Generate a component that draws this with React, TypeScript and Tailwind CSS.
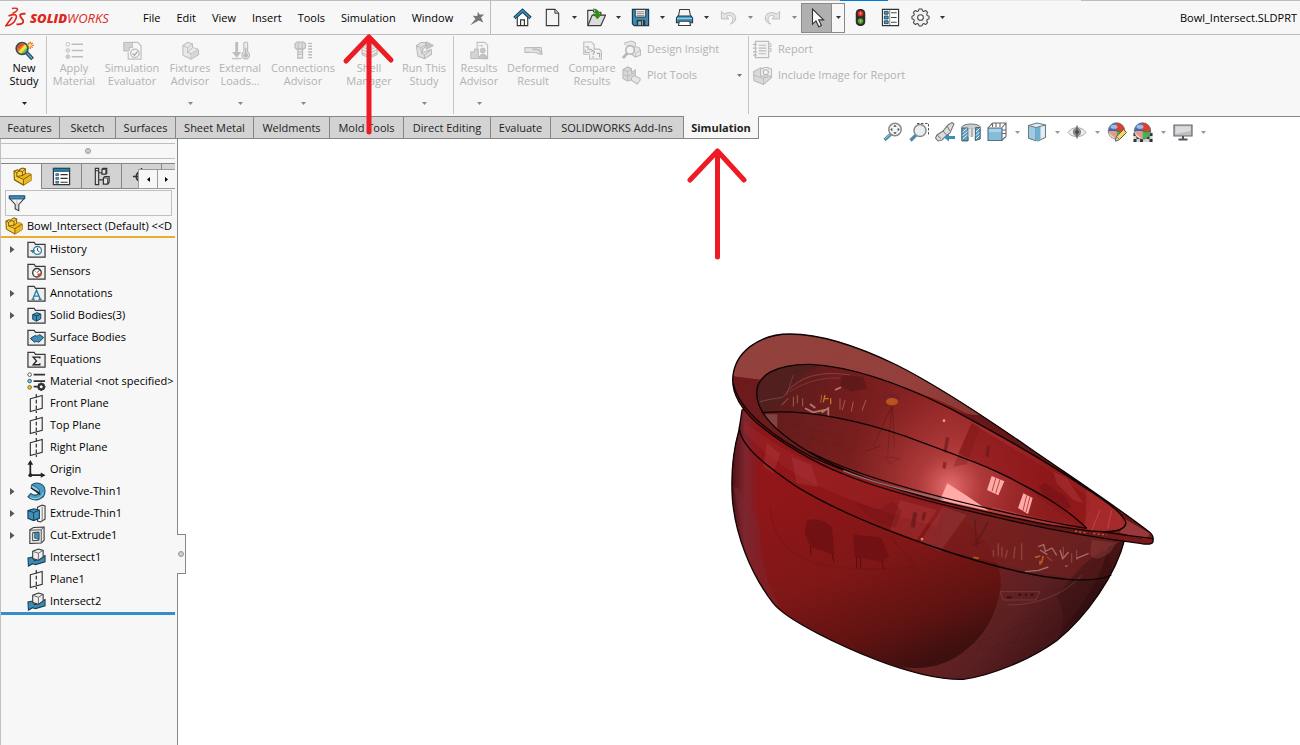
import React from 'react';

type IconProps = { className?: string };
type IconType = React.FC<IconProps>;

const makeIcon = (children: React.ReactNode): IconType => {
  const Icon: IconType = ({ className = 'w-5 h-5' }) => (
    <svg className={`${className} shrink-0`} viewBox="0 0 20 20" fill="none" aria-hidden="true">
      {children}
    </svg>
  );
  return Icon;
};

const Caret: React.FC<{ tone?: string }> = ({ tone = 'text-[#333]' }) => (
  <svg className={`w-[5px] h-[3px] shrink-0 ${tone}`} viewBox="0 0 5 3" fill="currentColor" aria-hidden="true">
    <path d="M0 0h5L2.5 3z" />
  </svg>
);

/* ---------- title bar icons ---------- */

const HomeIcon = makeIcon(
  <>
    <path d="M4.500 9.500V18.500h11V9.500L10 4.500z" fill="#fff" stroke="#333" strokeWidth="1.200" />
    <path d="M8 18.500v-6h4v6" stroke="#333" strokeWidth="1.200" />
    <path d="M1.500 10.500L10 2.500l8.500 8" stroke="#123f58" strokeWidth="3.400" />
    <path d="M2 10.300L10 2.800l8 7.500" stroke="#3f8fb8" strokeWidth="1.600" />
  </>
);

const NewDocIcon = makeIcon(
  <>
    <path d="M3.500 1.500h9l4 4v13h-13z" fill="#f4f4f4" stroke="#3a3a3a" strokeWidth="1.200" />
    <path d="M12.500 1.500v4h4" fill="#ccc" stroke="#3a3a3a" />
  </>
);

const OpenIcon = makeIcon(
  <>
    <path d="M.8 18.500V2.500h5.700l1 2h7v4" fill="#ececec" stroke="#3a3a3a" strokeWidth="1.200" />
    <path d="M1 18.500l4.500-11h14L14.500 18.500z" fill="#ddd" stroke="#3a3a3a" strokeWidth="1.200" />
    <path d="M6.500 1c4 0 6 1.500 6 5.200h3L11 11.500 6.500 6.200h2.800C9.300 3.500 8.600 2 6.500 1z" fill="#2e9410" stroke="#1e6d08" strokeWidth=".5" />
  </>
);

const SaveIcon = makeIcon(
  <>
    <path d="M1.500 1.500h17v17h-15l-2-2z" fill="#3d8cb4" stroke="#173b50" strokeWidth="1.300" />
    <path d="M4.500 1.500h11v8h-11z" fill="#f2f2f2" stroke="#333" />
    <path d="M6 4h8M6 6h8M6 8h8" stroke="#888" />
    <path d="M6 12.500h9v6H6z" fill="#333" />
    <path d="M7.500 14h3v4h-3z" fill="#7fb9d6" />
    <path d="M12 13v5" stroke="#aaa" />
  </>
);

const PrintIcon = makeIcon(
  <>
    <path d="M5 1.500h10l1.500 8h-13z" fill="#f5f5f5" stroke="#3a3a3a" strokeWidth="1.100" />
    <path d="M3 8.500h14l1.500 2v5h-17v-5z" fill="#3c8fb8" stroke="#173b50" strokeWidth="1.100" />
    <path d="M2 11h16" stroke="#8cc9e6" strokeWidth="1.500" />
    <path d="M4.500 14h11l.8 4.500H3.700z" fill="#fff" stroke="#3a3a3a" strokeWidth="1.100" />
  </>
);

const UndoIcon = makeIcon(
  <path d="M2.500 3.500v8h8L7.800 8.900c3-1.900 6-.8 6.700 1.700.7 2.400-.4 4.300-2.500 6.400 4.200-1.700 6.300-4.300 5.400-7.900C16.300 5 11 3.400 5.400 6.400z" fill="#e4e4e4" stroke="#bdbdbd" />
);

const RedoIcon = makeIcon(
  <path d="M17.500 3.500v8h-8l2.700-2.600c-3-1.900-6-.8-6.700 1.700-.7 2.400.4 4.300 2.500 6.400-4.200-1.700-6.300-4.300-5.400-7.900C3.700 5 9 3.400 14.600 6.400z" fill="#e4e4e4" stroke="#bdbdbd" />
);

const PointerIcon = makeIcon(
  <path d="M5.500 1v15.200l3.500-3.300 2.800 5.800 2.600-1.200-2.700-5.600h4.900z" fill="#fff" stroke="#333" strokeWidth="1.100" />
);

const TrafficIcon = makeIcon(
  <>
    <rect x="5" y="1" width="10" height="18" rx="4.500" fill="#2c2c2c" />
    <circle cx="10" cy="5.800" r="3" fill="#e0281a" />
    <circle cx="10" cy="13.800" r="3" fill="#4e9e1d" />
    <path d="M8 5.500h4M8 13.500h4M10 4v3.500M10 12v3.500" stroke="#ffffff" strokeOpacity=".35" />
  </>
);

const OptionsListIcon = makeIcon(
  <>
    <path d="M1.500 1.500h17v17h-17z" fill="#fff" stroke="#333" strokeWidth="1.200" />
    <path d="M3.500 3.500h4v3h-4zM3.500 8.500h4v3h-4zM3.500 13.500h4v3h-4z" fill="#4c9cc4" stroke="#1c4a62" />
    <path d="M10.500 5h6M10.500 10h6M10.500 15h6" stroke="#444" strokeWidth="1.200" />
    <path d="M9.200 2v16" stroke="#555" strokeWidth=".7" />
  </>
);

const GearIcon = makeIcon(
  <>
    <path
      d="M8.500 2h3l.6 2 1.400.6 1.900-1 2.100 2.100-1 1.900.6 1.400 1.900.6v2.800l-1.900.6-.6 1.400 1 1.900-2.100 2.100-1.900-1-1.400.6-.6 1.900h-3l-.6-1.900-1.400-.6-1.900 1-2.100-2.100 1-1.900-.6-1.400L1 12.400V9.600L2.900 9l.6-1.400-1-1.900 2.100-2.100 1.900 1L7.900 4z"
      fill="#f1f1f1" stroke="#444" strokeWidth="1.100" strokeLinejoin="round" transform="translate(0 -1)"
    />
    <circle cx="10" cy="10" r="3" fill="#fff" stroke="#444" strokeWidth="1.100" />
  </>
);

const PinIcon = makeIcon(
  <path d="M11 3l2 3.200 5-.2-3.500 3.500L17 15l-5-2.200L2.500 18l5.800-7-3-3.500 5 .2z" fill="#777" />
);

/* ---------- ribbon icons ---------- */

const NewStudyIcon = makeIcon(
  <>
    <path d="M12 12l6.500 7" stroke="#1f4b63" strokeWidth="4" />
    <path d="M12.500 12.500l5.500 6" stroke="#6aa9c9" strokeWidth="1.500" />
    <circle cx="7.500" cy="8" r="6" fill="#f4e53b" />
    <path d="M4 3h7L4 11H2V6z" fill="#ef7a28" />
    <path d="M5 3.200h5L3 8.500V6z" fill="#e8452a" />
    <path d="M6 13.500L13 6v4l-3.500 4z" fill="#5fc94a" />
    <path d="M8.500 14L13.500 8v3l-2.500 3z" fill="#49a6e8" />
    <circle cx="7.500" cy="8" r="6.200" stroke="#3b4a50" strokeWidth="1.800" />
    <path d="M16 .5v8M12 4.500h8M13.500 2l5 5M18.500 2l-5 5" stroke="#c96d10" strokeWidth="1.200" />
    <circle cx="16" cy="4.500" r="1.700" fill="#ffe37a" />
  </>
);

const MaterialIcon = makeIcon(
  <>
    <circle cx="3" cy="3.500" r="2" stroke="#c4c4c4" />
    <circle cx="3" cy="10" r="2" fill="#ddd" stroke="#c4c4c4" />
    <circle cx="3" cy="16.500" r="2" fill="#ccc" stroke="#c4c4c4" />
    <path d="M7 3.500h12M7 10h12M7 16.500h12" stroke="#bdbdbd" strokeWidth="1.500" />
  </>
);

const EvaluatorIcon = makeIcon(
  <>
    <path d="M9.500 1.500h6l3.500 3.500v14H5.500v-7" stroke="#c0c0c0" strokeWidth="1.300" />
    <path d="M.8 1.500h9V7H6.500v3.500H.8z" fill="#d4d4d4" stroke="#b8b8b8" />
    <circle cx="12.500" cy="13" r="4.500" fill="#f3f3f3" stroke="#bcbcbc" strokeWidth="1.300" />
    <path d="M10 13l2 2 3.500-4" stroke="#aaa" strokeWidth="1.300" />
  </>
);

const FixturesIcon = makeIcon(
  <>
    <path d="M2 5l5-3.500L12 3v4l5 1 1.500 2v4.500l-8 4.500L2 15z" fill="#e9e9e9" stroke="#bdbdbd" strokeWidth="1.100" />
    <path d="M2 5l5 2v5l3.500 1.500M7 7l5-4M10.500 19v-5.500L18 9M7 12l5-5" stroke="#bdbdbd" />
    <path d="M10.500 14l7.500-4.500v5l-7.500 4z" fill="#d6d6d6" />
  </>
);

const LoadsIcon = makeIcon(
  <>
    <path d="M4.500 1h3v10.500H11L6 17.500 1 11.500h3.500z" fill="#bdbdbd" />
    <path d="M1 18.500h10" stroke="#c4c4c4" strokeWidth="1.500" />
    <path d="M13.500 3a2 2 0 014 0v8.500a4 4 0 11-4 0z" fill="#eee" stroke="#bbb" strokeWidth="1.200" />
    <circle cx="15.500" cy="15" r="2.500" fill="#bbb" />
    <path d="M15.500 7v8" stroke="#bbb" strokeWidth="1.500" />
  </>
);

const ConnectionsIcon = makeIcon(
  <>
    <path d="M1 3l2-2h7l2 2v4l-2 1.500H3L1 7z" fill="#ddd" stroke="#b8b8b8" strokeWidth="1.200" />
    <path d="M4 8.500h5V18H4z" fill="#e9e9e9" stroke="#b8b8b8" strokeWidth="1.200" />
    <path d="M4 11.500h5M4 14h5M4.500 1.500v6.500M8.500 1.500v6.500" stroke="#b8b8b8" />
    <path d="M15 2.500h4M15 5.500h4M15 8.500h4M15 11.500h4M15 14.500h4M15 17.500h4" stroke="#bbb" strokeWidth="1.500" />
  </>
);

const ShellIcon = makeIcon(
  <>
    <path d="M2 6l8-4 8 4-8 4z" fill="#e2e2e2" stroke="#c0c0c0" />
    <path d="M2 9l8 4 8-4M2 12l8 4 8-4M2 6v8l8 4 8-4V6" stroke="#c0c0c0" strokeWidth="1.300" />
  </>
);

const RunIcon = makeIcon(
  <>
    <path d="M1.500 5l5-3.500H11V6L8 9v3l9-3 .5 5-7.500 4.500-7-2.500z" fill="#e0e0e0" stroke="#b8b8b8" strokeWidth="1.100" />
    <path d="M1.500 5L6 7l5-3M6 7l1 6.500 3 1V19M10 14.500L17 9" stroke="#b8b8b8" />
    <path d="M12 .8l7.500 4-7.500 4z" fill="#c4c4c4" stroke="#bbb" />
  </>
);

const ResultsIcon = makeIcon(
  <>
    <path d="M7.500 9V1.500h8l3 3v14H14" stroke="#c0c0c0" strokeWidth="1.200" />
    <path d="M.8 11.500h4V8.500h4v10h-8z" fill="#d5d5d5" stroke="#b8b8b8" />
    <path d="M9 5h5M12 4v2" stroke="#c6c6c6" />
    <circle cx="13.500" cy="10" r="2.500" fill="#c9c9c9" stroke="#b5b5b5" />
    <path d="M9.500 18.500c0-6 8.500-6 8.500 0z" fill="#c4c4c4" stroke="#b5b5b5" />
  </>
);

const DeformedIcon = makeIcon(
  <>
    <path d="M1 7h17l1 7h-3c-1-3-8-2-15-2z" fill="#e6e6e6" stroke="#bdbdbd" strokeWidth="1.200" />
    <path d="M9 9c4-.5 8-.5 9 4" stroke="#c0c0c0" strokeWidth="2" />
  </>
);

const CompareIcon = makeIcon(
  <>
    <path d="M.8 1h8l3 3v10h-11z" fill="#f3f3f3" stroke="#bdbdbd" strokeWidth="1.200" />
    <path d="M2.500 6h3v3h4M2.500 9v3h5" stroke="#bdbdbd" strokeWidth="1.500" />
    <path d="M11 8.500h6l2.500 2.500v8H7V15" fill="#f3f3f3" stroke="#bdbdbd" strokeWidth="1.200" />
    <path d="M9 11.500c.5-2 3.500-1.500 3 .5-.3 1-1.500 1-1.500 2.500M10.500 16v1.500M14.500 13h3v4" stroke="#ababab" strokeWidth="1.300" />
  </>
);

const InsightIcon = makeIcon(
  <>
    <path d="M3 5V3l7-2 4 2v4l4 1 1.500 3v5L14 18l-4-3" fill="#e6e6e6" stroke="#bdbdbd" strokeWidth="1.100" />
    <path d="M14 7l-3 2M19 11l-5 3v4" stroke="#bdbdbd" />
    <circle cx="8.500" cy="10.500" r="4.500" fill="#f4f4f4" stroke="#b3b3b3" strokeWidth="1.600" />
    <path d="M5.500 14L1 19" stroke="#b8b8b8" strokeWidth="3" />
  </>
);

const PlotIcon = makeIcon(
  <>
    <path d="M1 4l5-3 4 2v4l4-3v9l-8 3-5-3z" fill="#d9d9d9" stroke="#b9b9b9" strokeWidth="1.100" />
    <path d="M1 4l5 2v9M6 6l4-3M2 9l4 2 8-4" stroke="#b9b9b9" />
    <path d="M10 12l3-2 6 3v2l-3 4-6-4z" fill="#e6e6e6" stroke="#b9b9b9" strokeWidth="1.100" />
  </>
);

const ReportIcon = makeIcon(
  <>
    <path d="M2.500 1.500h14v17h-14z" fill="#f3f3f3" stroke="#bdbdbd" strokeWidth="1.300" />
    <path d="M6 5.500h8M6 8.500h8M6 11.500h8M6 14.500h8" stroke="#bababa" strokeWidth="1.200" />
    <path d="M0 4.500h4M0 8.500h4M0 12.500h4M0 16h4" stroke="#bababa" strokeWidth="1.300" />
    <path d="M17 4h2v3h-2M17 9h2v3h-2" stroke="#bababa" />
  </>
);

const CameraIcon = makeIcon(
  <>
    <path d="M.5 6l7-4h2v8h10v2L11 19.500l-10-4z" fill="#d9d9d9" stroke="#bababa" strokeWidth="1.100" />
    <path d="M.5 9.500L11 13v6M11 13l8-3" stroke="#bababa" />
    <path d="M8 3h3l1-1.500h4L17 3h2.500v7.500H8z" fill="#eee" stroke="#bababa" strokeWidth="1.100" />
    <circle cx="13.500" cy="6.500" r="2.600" fill="#f8f8f8" stroke="#b3b3b3" strokeWidth="1.200" />
  </>
);

/* ---------- view toolbar icons ---------- */

const ZoomFitIcon = makeIcon(
  <>
    <path d="M8 12L1.500 18" stroke="#4f8ba9" strokeWidth="3.200" />
    <path d="M7.500 12L2 17" stroke="#a5cadc" strokeWidth="1" />
    <circle cx="12" cy="7.500" r="6.200" fill="#f2f4f5" stroke="#8a8a8a" strokeWidth="1.500" />
    <path d="M12 2.800l1.700 2h-3.400zM12 12.200l1.700-2h-3.400zM7.300 7.500l2-1.700v3.400zM16.700 7.500l-2-1.700v3.400z" fill="#444" />
  </>
);

const ZoomAreaIcon = makeIcon(
  <>
    <path d="M8 1.500h11.500V14" stroke="#555" strokeDasharray="2.500 1.500" />
    <path d="M7 13l-5.500 5.500" stroke="#4f8ba9" strokeWidth="3.200" />
    <circle cx="11" cy="8.500" r="6" fill="#e9eef0" stroke="#8a8a8a" strokeWidth="1.500" />
  </>
);

const PrevViewIcon = makeIcon(
  <>
    <path d="M13 3l4-2.500 2 1.500-4 9-3 2-5 5-4 1-2.500-3L2 13l6-4z" fill="#dcdcdc" stroke="#777" strokeWidth="1.100" />
    <path d="M12 4l3 5M8 9l3.500 4M2 13l4 3.500" stroke="#777" />
    <path d="M9 15.500l5-4V14h6v3h-6v2.500z" fill="#3f8cb8" />
  </>
);

const SectionIcon = makeIcon(
  <>
    <path d="M.8 5C2 1 18 1 19.200 5v12l-5 1.500V7H7v12H.8z" fill="#c9ced1" stroke="#777" />
    <path d="M1 6h6v12.500H1zM14.500 5.500H19v11l-4.500 2z" fill="#5b9ec0" stroke="#4b6d7e" />
    <path d="M1.500 10L6 6.500M1.500 13.500L6.500 9.500M1.500 17l5-4M15 10l3.500-3.500M15 13.500l3.500-3.500M15 17l3.500-3.500" stroke="#e5f2f8" />
    <path d="M7.500 6.500h6.500V15H7.500z" fill="#e2e2e2" />
    <path d="M10 6.500h2V15h-2z" fill="#b4b4b4" />
  </>
);

const OrientationIcon = makeIcon(
  <>
    <path d="M5.500 1h13.500v13.500M5.500 1v4M19 1l-4 4.500M9 1v4M13 1.500V5M15 8h4M15 11.500h4M5.500 1L1 6M15 18l4-3.500" stroke="#666" strokeWidth="1.100" />
    <path d="M1 6h14v12.500H1z" fill="#86bcd8" stroke="#4d7388" strokeWidth="1.100" />
    <path d="M2 7h12v3H2z" fill="#a8d3e8" />
  </>
);

const DisplayStyleIcon = makeIcon(
  <>
    <path d="M1.500 3.500L10 1l8.500 2v12.500L11 19l-9.500-3z" fill="#e6eef2" stroke="#6f7d84" strokeWidth="1.100" />
    <path d="M1.500 3.500L9 5.500V19l-7.500-3z" fill="#9ecbe1" stroke="#6f7d84" />
    <path d="M9 5.500l4.500-1V18L9 19z" fill="#6fb0d0" />
    <path d="M9 5.500l9.500-2.500" stroke="#6f7d84" />
  </>
);

const EyeIcon = makeIcon(
  <>
    <path d="M1 10.500C5 4 15 4 19 10.500 15 16 5 16 1 10.500z" fill="#eee" stroke="#aaa" />
    <circle cx="10" cy="10" r="4.200" fill="#8c8c8c" />
    <circle cx="10" cy="10" r="1.800" fill="#333" />
    <path d="M10 3.500v13" stroke="#555" strokeWidth="1.200" />
  </>
);

const ball = (
  <>
    <circle cx="9.500" cy="9" r="8.300" fill="#3f78c8" />
    <path d="M9.500 9V.7A8.300 8.300 0 0117.800 9z" fill="#e03c30" />
    <path d="M9.500 9h8.300a8.300 8.300 0 01-8.300 8.300z" fill="#45b44b" />
    <path d="M9.500 9v8.300A8.300 8.300 0 011.200 9z" fill="#efe7d8" />
    <path d="M1.200 9q4-2.500 8.300 0 4.500 2.200 8.300 0" stroke="#444" strokeWidth=".6" />
    <path d="M1.200 9l8.300 0L9 17C6 14 3 13 1.200 9z" fill="#e04a3a" fillOpacity=".5" />
    <ellipse cx="7" cy="4.800" rx="3.500" ry="2" fill="#fff" fillOpacity=".5" />
    <circle cx="9.500" cy="9" r="8.300" stroke="#666" strokeWidth=".6" />
  </>
);

const AppearanceIcon = makeIcon(
  <>
    {ball}
    <path d="M8.500 19l1-4.500 7-7 3 3-7 7z" fill="#f3d36a" stroke="#6b5a2a" />
    <path d="M8.500 19l1-4.500 3 3z" fill="#e9e2cc" stroke="#555" strokeWidth=".7" />
  </>
);

const SceneIcon = makeIcon(
  <>
    <path d="M.5 10.500h19V20H.5z" fill="#d5d5d5" />
    <path d="M.5 11h3v3h-3zM16.500 11h3v3h-3zM3.500 14h3v3h-3zM13.500 14h3v3h-3zM.5 17h3v3h-3zM7 17h3v3H7zM16.500 17h3v3h-3z" fill="#333" />
    {ball}
  </>
);

const MonitorIcon = makeIcon(
  <>
    <path d="M1 3h18v11H1z" fill="#bcc0c2" stroke="#666" strokeWidth="1.200" />
    <path d="M2.500 4.500h15V9l-15 3z" fill="#dadddf" />
    <path d="M10 14v3M5.500 17.500h9" stroke="#555" strokeWidth="2" />
  </>
);

/* ---------- feature tree icons ---------- */

const PartIcon = makeIcon(
  <>
    <path d="M1 4.500l3.500-1.500 2.500 1V2.500L10 1l3 1v5l3.500-.5 2.500 1.500v6L11 19l-9.500-5.500z" fill="#f8cf45" stroke="#7a5800" strokeWidth="1.100" />
    <path d="M7 9.500l6-2.500 3.500-.5L19 8v6l-8 5v-6.500z" fill="#eeb51c" />
    <path d="M1 4.500l3 1.500v4l7 3 8-5M4 6l3-2M7 4l3 1v4.500M10 5l3-3M4 10l6-1 3-2M11 13v6" stroke="#7a5800" />
  </>
);

const PropertyIcon = makeIcon(
  <>
    <path d="M1.500 1.500h17v17h-17z" fill="#fff" stroke="#333" strokeWidth="1.300" />
    <path d="M1.500 1.500h17v3h-17z" fill="#2f80ab" stroke="#1c4a62" />
    <path d="M4 7h3v2H4zM4 11h3v2H4zM4 15h3v2H4z" fill="#4c9cc4" stroke="#1c4a62" strokeWidth=".7" />
    <path d="M9 8h7.500M9 12h7.500M9 16h7.500" stroke="#333" strokeWidth="1.200" />
  </>
);

const ConfigIcon = makeIcon(
  <>
    <path d="M3.500 1.500h3.500v17H3.500zM3.500 4h3.500M7 6h4M7 13.500h5" fill="#ddd" stroke="#333" strokeWidth="1.200" />
    <path d="M10.500 2.500l1-1h4v5l-1 1h-4zM12 11.500l1.500-1.500H18v6l-1.500 2H12z" fill="#e6e6e6" stroke="#333" strokeWidth="1.300" />
    <path d="M10.500 2.500h4v5M12 11.500h4.500V18" stroke="#333" />
  </>
);

const TargetIcon = makeIcon(
  <>
    <path d="M1 10h18M10 1v18" stroke="#333" strokeWidth="1.500" />
    <circle cx="10" cy="10" r="5.500" stroke="#333" strokeWidth="1.800" />
  </>
);

const FilterIcon = makeIcon(
  <>
    <path d="M1.500 2.500h17v2L12 11.500v7l-4-2v-5L1.500 4.500z" fill="#f5f5f5" stroke="#3b3b3b" strokeWidth="1.200" />
    <path d="M1.500 2h17v3.500h-17z" fill="#3c8fb8" stroke="#1d4b63" />
    <path d="M10 7v10" stroke="#b5b5b5" />
  </>
);

const folder = <path d="M1 18V2.500h6.500l1.500 2h10V18z" fill="#efefef" stroke="#3a3a3a" strokeWidth="1.300" />;

const HistoryIcon = makeIcon(
  <>
    {folder}
    <circle cx="11" cy="11" r="4.200" fill="#fff" stroke="#2f7ea6" strokeWidth="1.400" />
    <path d="M11 8.500V11l2.200 1.500" stroke="#333" />
    <path d="M3 10.500h6l-3 3.500z" fill="#2f7ea6" />
  </>
);

const SensorsIcon = makeIcon(
  <>
    {folder}
    <circle cx="10.500" cy="11.300" r="4.500" fill="#fff" stroke="#333" strokeWidth="1.400" />
    <path d="M10.500 11.300l3-3M8 9l1 1" stroke="#333" />
    <path d="M11 12h4c0 2-1.500 3.500-3.500 3.800z" fill="#e0401f" />
  </>
);

const AnnotationsIcon = makeIcon(
  <>
    {folder}
    <path d="M6 16l4-9.500L14 16M7.500 12.800h5M4.800 16.200h3.400M12 16.200h3.500" stroke="#2f7ea6" strokeWidth="1.500" />
  </>
);

const SolidIcon = makeIcon(
  <>
    {folder}
    <path d="M6 9l4.500-2 4 1.500v5L10 16l-4-2z" fill="#3f90ba" stroke="#153e54" />
    <path d="M6 9l4 1.500L14.500 8.500M10 10.500V16" stroke="#153e54" />
  </>
);

const SurfaceIcon = makeIcon(
  <>
    {folder}
    <path d="M3.500 11l5-3c2 1 3 0 5-1l4 3-5 5c-2-1-3-1-4.500 0z" fill="#3f90ba" stroke="#153e54" />
  </>
);

const EquationsIcon = makeIcon(
  <>
    {folder}
    <path d="M13.500 9V7.500h-7l3.500 4-3.500 4h7V14" stroke="#222" strokeWidth="1.400" />
  </>
);

const MaterialTreeIcon = makeIcon(
  <>
    <circle cx="2.800" cy="2.800" r="1.900" fill="#fff" stroke="#555" />
    <circle cx="2.800" cy="9.500" r="1.900" fill="#7fc1e3" stroke="#27607d" />
    <circle cx="2.800" cy="16.200" r="1.900" fill="#f6c62c" stroke="#84640d" />
    <path d="M7 2.800h12M7 9.500h12M7 15.500h4" stroke="#333" strokeWidth="1.800" />
    <circle cx="15" cy="15.500" r="2.800" stroke="#333" strokeWidth="2.400" />
    <path d="M15 11v2M15 18v2M10.500 15.500h2M17.500 15.500h2M12 12.500l1.500 1.500M18 12.500L16.500 14M12 18.500l1.500-1.500M18 18.500L16.500 17" stroke="#333" strokeWidth="1.500" />
  </>
);

const PlaneIcon = makeIcon(
  <>
    <path d="M3.500 5L16 1.500v13.500L3.500 18.500z" stroke="#333" strokeWidth="1.200" />
    <path d="M9.800 0v20" stroke="#333" strokeWidth="1.300" strokeDasharray="4 2" />
  </>
);

const OriginIcon = makeIcon(
  <>
    <path d="M3.500 3v13H16" stroke="#222" strokeWidth="1.800" />
    <path d="M3.500 0l3 5h-6zM19.500 16l-5 2.800v-5.600z" fill="#222" />
    <circle cx="3.500" cy="16" r="2" fill="#222" />
  </>
);

const RevolveIcon = makeIcon(
  <>
    <path d="M5 3c5-4 14-1 14 6.500C19 19 7 21.500 1 15.500L4 12c4 3.500 9 1.500 9-2.500" fill="#4a9cc5" stroke="#1b4d67" strokeWidth="1.100" />
    <path d="M5 3C4 5 4.500 6.500 6 7.500l7 3.500C14 8 10 5 5 3z" fill="#8cc7e3" stroke="#1b4d67" />
    <path d="M4 6l10 7" stroke="#222" strokeWidth="1.400" />
    <path d="M3 16c6 3.500 13 .5 14-5" stroke="#9ad0ea" />
  </>
);

const ExtrudeIcon = makeIcon(
  <>
    <path d="M11 3.500l5-2.500 3 1v14l-5 3-3-1z" fill="#f4f4f4" stroke="#333" strokeWidth="1.100" />
    <path d="M1 7l6-2 6 1.500V15l-6 2.500-6-2.500z" fill="#3f90ba" stroke="#153e54" strokeWidth="1.200" />
    <path d="M1 7l6 2 6-2.500M7 9v8.500" stroke="#153e54" />
    <path d="M16 3v14" stroke="#777" />
  </>
);

const CutIcon = makeIcon(
  <>
    <path d="M3 4l4-2.500 11-.5v14l-3 3-12 .5z" fill="#e9e9e9" stroke="#333" strokeWidth="1.100" />
    <path d="M3 4.500l12-.5v14M15 4l3-3" stroke="#555" />
    <path d="M6 7l6.500-.5v8.500L6 15.500z" fill="#fff" stroke="#333" />
    <path d="M8 7v6l4.500 1V6.500z" fill="#3f90ba" stroke="#153e54" strokeWidth=".7" />
  </>
);

const IntersectIcon = makeIcon(
  <>
    <path d="M1 10.500l5-1 2 4 11-5.500v6.500L9 17.500l-3-1L1.500 19z" fill="#3a8cb7" stroke="#153e54" strokeWidth="1.100" />
    <path d="M6 3.500L12 1l5 1.500v7l-5 3.500-6-2z" fill="#efefef" stroke="#333" strokeWidth="1.100" />
    <path d="M6 3.500l6 2 5-3M12 5.500V13" stroke="#666" />
  </>
);

/* ---------- title bar ---------- */

const Logo: React.FC = () => (
  <div className="flex items-center gap-1 w-[135px] pl-[5px] shrink-0 text-[#da291c]">
    <svg className="w-[21px] h-[21px] shrink-0" viewBox="0 0 21 21" fill="none" stroke="currentColor" aria-label="DS" role="img">
      <path d="M7 1.500c4.500-1 7 .2 4.500 2.500C10.300 5 9 5.800 7.500 6.500" strokeWidth="1.500" />
      <path d="M3.500 9c6-2.500 9-1.500 7.500 2.500C9.500 15.500 6 18.500.8 18.800L7.200 10" strokeWidth="1.600" />
      <path d="M20.500 6.800c-4-.4-6 .5-5.300 2.500.6 1.700 3.800 3.300 3 5.700-.6 1.900-3.200 2.500-6.700 2.300" strokeWidth="1.900" />
    </svg>
    <span className="font-['Open_Sans',sans-serif] text-[13px] leading-4 italic">
      <b className="font-extrabold">SOLID</b>WORKS
    </span>
  </div>
);

const menus = ['File', 'Edit', 'View', 'Insert', 'Tools', 'Simulation', 'Window'];

const ToolButton: React.FC<{ label: string; icon: IconType; menu?: boolean; disabled?: boolean }> = ({ label, icon: Icon, menu, disabled }) => (
  <div className="flex items-center">
    <button aria-label={label} disabled={disabled} className="flex items-center justify-center w-[30px] h-7">
      <Icon className="w-[19px] h-[19px]" />
    </button>
    {menu && (
      <button aria-label={`${label} options`} disabled={disabled} className="flex items-center justify-center w-[14px] h-7">
        <Caret tone={disabled ? 'text-[#888]' : 'text-[#333]'} />
      </button>
    )}
  </div>
);

const TitleBar: React.FC = () => (
  <header className="flex items-center h-[35px] bg-[#f7f7f7] border-t border-b border-[#bdbdbd]">
    <Logo />
    <nav className="flex items-center">
      {menus.map((name) => (
        <button key={name} className="px-2 h-7 text-black">
          {name}
        </button>
      ))}
      <button aria-label="Pin menu" className="pl-[7px] pr-[2px] h-7 flex items-center">
        <PinIcon className="w-[18px] h-[18px]" />
      </button>
    </nav>
    <div className="flex items-center h-full border-l border-[#bdbdbd] ml-[2px] pl-4">
      <ToolButton label="Home" icon={HomeIcon} />
      <ToolButton label="New" icon={NewDocIcon} menu />
      <ToolButton label="Open" icon={OpenIcon} menu />
      <ToolButton label="Save" icon={SaveIcon} menu />
      <ToolButton label="Print" icon={PrintIcon} menu />
      <ToolButton label="Undo" icon={UndoIcon} menu disabled />
      <ToolButton label="Redo" icon={RedoIcon} menu disabled />
      <div className="flex h-[30px] border border-[#8a8a8a]">
        <button aria-label="Select" className="w-[30px] flex items-center justify-center bg-[#b0b0b0] border-r border-[#8a8a8a]">
          <PointerIcon />
        </button>
        <button aria-label="Select options" className="w-3 flex items-center justify-center">
          <Caret />
        </button>
      </div>
      <ToolButton label="Rebuild" icon={TrafficIcon} />
      <ToolButton label="File properties" icon={OptionsListIcon} />
      <ToolButton label="Options" icon={GearIcon} menu />
    </div>
    <span className="ml-auto pr-[3px] text-black whitespace-nowrap">Bowl_Intersect.SLDPRT</span>
  </header>
);

/* ---------- ribbon ---------- */

type Command = { lines: [string, string]; icon: IconType; width: string; menu?: boolean };

const setupCommands: Command[] = [
  { lines: ['Apply', 'Material'], icon: MaterialIcon, width: 'w-[54px]' },
  { lines: ['Simulation', 'Evaluator'], icon: EvaluatorIcon, width: 'w-[62px]' },
  { lines: ['Fixtures', 'Advisor'], icon: FixturesIcon, width: 'w-[54px]', menu: true },
  { lines: ['External', 'Loads...'], icon: LoadsIcon, width: 'w-[46px]', menu: true },
  { lines: ['Connections', 'Advisor'], icon: ConnectionsIcon, width: 'w-[80px]', menu: true },
  { lines: ['Shell', 'Manager'], icon: ShellIcon, width: 'w-[52px]' },
  { lines: ['Run This', 'Study'], icon: RunIcon, width: 'w-[58px]', menu: true },
];

const resultCommands: Command[] = [
  { lines: ['Results', 'Advisor'], icon: ResultsIcon, width: 'w-[50px]', menu: true },
  { lines: ['Deformed', 'Result'], icon: DeformedIcon, width: 'w-[58px]' },
  { lines: ['Compare', 'Results'], icon: CompareIcon, width: 'w-[60px]' },
];

const CommandButton: React.FC<{ command: Command; enabled?: boolean }> = ({ command, enabled }) => {
  const Icon = command.icon;
  return (
    <button
      disabled={!enabled}
      className={`${command.width} flex flex-col items-center pt-[5px] leading-[13px] whitespace-nowrap ${enabled ? 'text-black' : 'text-[#b2b2b2]'}`}
    >
      <Icon className="w-[19px] h-[19px]" />
      <span className="mt-px">{command.lines[0]}</span>
      <span>{command.lines[1]}</span>
      {command.menu && (
        <span className="mt-[15px]">
          <Caret tone={enabled ? 'text-[#222]' : 'text-[#888]'} />
        </span>
      )}
    </button>
  );
};

const RowCommand: React.FC<{ label: string; icon: IconType; menu?: boolean }> = ({ label, icon: Icon, menu }) => (
  <button disabled className="flex items-center h-[26px] gap-[6px] text-[#b2b2b2] whitespace-nowrap">
    <Icon className="w-[19px] h-[19px]" />
    <span>{label}</span>
    {menu && (
      <span className="ml-auto pr-[6px]">
        <Caret tone="text-[#777]" />
      </span>
    )}
  </button>
);

const Ribbon: React.FC = () => (
  <section className="flex h-[81px] bg-[#f7f7f7] pt-px pb-[2px]">
    <div className="flex w-[47px] pl-[2px] border-r border-[#c6c6c6]">
      <CommandButton enabled command={{ lines: ['New', 'Study'], icon: NewStudyIcon, width: 'w-full', menu: true }} />
    </div>
    <div className="flex border-r border-[#c6c6c6]">
      {setupCommands.map((command) => (
        <CommandButton key={command.lines[0]} command={command} />
      ))}
    </div>
    <div className="flex border-r border-[#c6c6c6]">
      {resultCommands.map((command) => (
        <CommandButton key={command.lines[0]} command={command} />
      ))}
      <div className="flex flex-col w-[126px]">
        <RowCommand label="Design Insight" icon={InsightIcon} />
        <RowCommand label="Plot Tools" icon={PlotIcon} menu />
      </div>
    </div>
    <div className="flex flex-col pl-1">
      <RowCommand label="Report" icon={ReportIcon} />
      <RowCommand label="Include Image for Report" icon={CameraIcon} />
    </div>
  </section>
);

/* ---------- command manager tabs ---------- */

const tabs = [
  { name: 'Features', width: 'w-[60px]' },
  { name: 'Sketch', width: 'w-[56px]' },
  { name: 'Surfaces', width: 'w-[60px]' },
  { name: 'Sheet Metal', width: 'w-[78px]' },
  { name: 'Weldments', width: 'w-[76px]' },
  { name: 'Mold Tools', width: 'w-[74px]' },
  { name: 'Direct Editing', width: 'w-[87px]' },
  { name: 'Evaluate', width: 'w-[60px]' },
  { name: 'SOLIDWORKS Add-Ins', width: 'w-[133px]' },
  { name: 'Simulation', width: 'w-[75px]' },
];

const CommandTabs: React.FC = () => (
  <div className="flex h-[23px]" role="tablist">
    {tabs.map((tab) => {
      const active = tab.name === 'Simulation';
      return (
        <button
          key={tab.name}
          role="tab"
          aria-selected={active}
          className={`${tab.width} shrink-0 whitespace-nowrap border-t border-r border-b border-[#868686] text-[#222] ${
            active ? 'bg-[#f7f7f7] border-t-[#f7f7f7] font-bold' : 'bg-[#d3d3d3]'
          }`}
        >
          {tab.name}
        </button>
      );
    })}
    <div className="flex-1 border-t border-[#868686]" />
  </div>
);

const viewTools: { label: string; icon: IconType; menu?: boolean }[] = [
  { label: 'Zoom to fit', icon: ZoomFitIcon },
  { label: 'Zoom to area', icon: ZoomAreaIcon },
  { label: 'Previous view', icon: PrevViewIcon },
  { label: 'Section view', icon: SectionIcon },
  { label: 'View orientation', icon: OrientationIcon, menu: true },
  { label: 'Display style', icon: DisplayStyleIcon, menu: true },
  { label: 'Hide/show items', icon: EyeIcon, menu: true },
  { label: 'Edit appearance', icon: AppearanceIcon },
  { label: 'Apply scene', icon: SceneIcon, menu: true },
  { label: 'View settings', icon: MonitorIcon, menu: true },
];

const ViewToolbar: React.FC = () => (
  <div className="absolute top-[5px] left-[880px] flex items-center h-[22px]">
    {viewTools.map(({ label, icon: Icon, menu }) => (
      <React.Fragment key={label}>
        <button aria-label={label} className="w-[26px] flex items-center justify-center">
          <Icon />
        </button>
        {menu && (
          <button aria-label={`${label} options`} className="w-[14px] h-5 flex items-center justify-center">
            <Caret tone="text-[#999]" />
          </button>
        )}
      </React.Fragment>
    ))}
  </div>
);

/* ---------- feature tree ---------- */

const treeItems: { name: string; icon: IconType; expandable?: boolean }[] = [
  { name: 'History', icon: HistoryIcon, expandable: true },
  { name: 'Sensors', icon: SensorsIcon },
  { name: 'Annotations', icon: AnnotationsIcon, expandable: true },
  { name: 'Solid Bodies(3)', icon: SolidIcon, expandable: true },
  { name: 'Surface Bodies', icon: SurfaceIcon },
  { name: 'Equations', icon: EquationsIcon },
  { name: 'Material <not specified>', icon: MaterialTreeIcon },
  { name: 'Front Plane', icon: PlaneIcon },
  { name: 'Top Plane', icon: PlaneIcon },
  { name: 'Right Plane', icon: PlaneIcon },
  { name: 'Origin', icon: OriginIcon },
  { name: 'Revolve-Thin1', icon: RevolveIcon, expandable: true },
  { name: 'Extrude-Thin1', icon: ExtrudeIcon, expandable: true },
  { name: 'Cut-Extrude1', icon: CutIcon, expandable: true },
  { name: 'Intersect1', icon: IntersectIcon },
  { name: 'Plane1', icon: PlaneIcon },
  { name: 'Intersect2', icon: IntersectIcon },
];

const panelTabs = [
  { label: 'Feature tree', icon: PartIcon },
  { label: 'Property manager', icon: PropertyIcon },
  { label: 'Configurations', icon: ConfigIcon },
  { label: 'Dimensions', icon: TargetIcon },
];

const FeatureTree: React.FC = () => (
  <aside className="relative w-[178px] shrink-0 bg-[#f7f7f7] border-l border-l-[#c0c0c0] border-r border-r-[#868686] pr-[2px]">
    <div className="mt-1 h-4 flex items-center justify-center border-t border-b border-[#c0c0c0]">
      <span className="w-[6px] h-[6px] rounded-full bg-[#ccc] border border-[#999]" />
    </div>
    <div className="relative mt-1 flex h-[26px] overflow-hidden" role="tablist">
      {panelTabs.map(({ label, icon: Icon }, i) => (
        <button
          key={label}
          role="tab"
          aria-label={label}
          aria-selected={i === 0}
          className={`shrink-0 flex items-center justify-center border-t border-r border-[#868686] ${
            i === 0 ? 'w-[41px] pl-[3px] bg-[#f7f7f7]' : 'w-10 bg-[#d3d3d3] border-b'
          }`}
        >
          <Icon className="w-[19px] h-[19px]" />
        </button>
      ))}
      <div className="flex-1 bg-[#d3d3d3] border-t border-b border-[#868686]" />
      <div className="absolute right-0 bottom-0 flex h-[20px] bg-[#f7f7f7] border-t border-l border-b border-[#9a9a9a]">
        <button aria-label="Scroll tabs left" className="w-[19px] flex items-center justify-center border-r border-[#9a9a9a]">
          <svg className="w-[3px] h-[5px]" viewBox="0 0 3 5"><path d="M3 0v5L0 2.500z" /></svg>
        </button>
        <button aria-label="Scroll tabs right" className="w-[17px] flex items-center justify-center">
          <svg className="w-[3px] h-[5px]" viewBox="0 0 3 5"><path d="M0 0v5l3-2.500z" /></svg>
        </button>
      </div>
    </div>
    <label className="flex items-center h-[26px] mt-px ml-1 mr-[3px] pl-[2px] border border-[#c0c0c0]">
      <FilterIcon className="w-[18px] h-[18px]" />
      <input aria-label="Filter" className="flex-1 min-w-0 h-full bg-transparent outline-none" />
    </label>
    <button className="flex items-center w-full h-5 pl-1 gap-1 whitespace-nowrap text-black">
      <PartIcon className="w-[18px] h-[18px]" />
      <span>Bowl_Intersect (Default) &lt;&lt;D</span>
    </button>
    <div className="h-[2px] bg-[#e6ad2e]" />
    <ul>
      {treeItems.map(({ name, icon: Icon, expandable }) => (
        <li key={name} className="flex items-center h-[22px] whitespace-nowrap text-black">
          <span className="w-[26px] pl-[9px] shrink-0">
            {expandable && (
              <button aria-label={`Expand ${name}`} className="flex">
                <svg className="w-[5px] h-[7px]" viewBox="0 0 5 7" fill="#555"><path d="M0 0v7l4.500-3.500z" /></svg>
              </button>
            )}
          </span>
          <button className="flex items-center gap-1">
            <Icon className="w-[19px] h-[19px]" />
            <span>{name}</span>
          </button>
        </li>
      ))}
    </ul>
    <div className="h-[3px] bg-[#368ec6]" />
    <button aria-label="Collapse panel" className="absolute top-[395px] -right-[9px] w-[9px] h-10 flex items-center justify-center bg-[#f7f7f7] border-t border-r border-b border-[#868686]">
      <span className="w-[6px] h-[6px] rounded-full bg-[#ccc] border border-[#999] shrink-0" />
    </button>
  </aside>
);

/* ---------- model ---------- */

const bodyPath =
  'M96 270C92 300 90 310 87 330C70 390 62 450 67 535C75 640 120 760 190 850C235 905 400 980 500 1020C590 1055 690 1080 760 1078C840 1068 960 1020 1040 962C1130 890 1218 765 1245 655L700 500L110 260Z';
const flangePath =
  'M68 180C70 95 150 42 240 42C340 42 450 82 560 135C690 200 830 295 950 378C1080 468 1220 560 1318 636Q1334 648 1328 668Q1322 676 1290 670C1180 656 1010 628 860 592C700 556 520 512 400 462C270 408 190 350 140 308C95 268 68 225 68 180Z';
const rimPath =
  'M140 222C138 165 200 132 300 133C440 140 590 200 720 265C860 340 1010 425 1110 493C1170 530 1240 580 1248 608Q1246 636 1180 635C1070 630 900 592 760 560C600 525 440 470 330 415C220 355 142 290 140 222Z';

const Bowl: React.FC = () => (
  <svg className="w-[460px] h-[380px]" viewBox="0 0 1380 1140" fill="none" role="img" aria-label="Bowl_Intersect model">
    <defs>
      <linearGradient id="body" x1="330" y1="480" x2="560" y2="1060" gradientUnits="userSpaceOnUse">
        <stop offset="0" stopColor="#901619" />
        <stop offset=".45" stopColor="#801717" />
        <stop offset=".8" stopColor="#5e1311" />
        <stop offset="1" stopColor="#3d100f" />
      </linearGradient>
      <linearGradient id="bodySide" x1="780" y1="680" x2="1120" y2="980" gradientUnits="userSpaceOnUse">
        <stop offset="0" stopColor="#77201f" />
        <stop offset=".5" stopColor="#5c2022" />
        <stop offset="1" stopColor="#351013" />
      </linearGradient>
      <linearGradient id="leftEdge" x1="64" y1="0" x2="170" y2="0" gradientUnits="userSpaceOnUse">
        <stop offset="0" stopColor="#511014" />
        <stop offset=".4" stopColor="#7e2630" />
        <stop offset="1" stopColor="#8a1518" stopOpacity="0" />
      </linearGradient>
      <linearGradient id="flange" x1="150" y1="60" x2="820" y2="300" gradientUnits="userSpaceOnUse">
        <stop offset="0" stopColor="#92413c" />
        <stop offset=".7" stopColor="#943f3b" />
        <stop offset="1" stopColor="#873733" />
      </linearGradient>
      <linearGradient id="inside" x1="140" y1="250" x2="1240" y2="520" gradientUnits="userSpaceOnUse">
        <stop offset="0" stopColor="#551b1b" />
        <stop offset=".25" stopColor="#751d1d" />
        <stop offset=".5" stopColor="#922626" />
        <stop offset=".8" stopColor="#92191b" />
        <stop offset="1" stopColor="#a02224" />
      </linearGradient>
      <radialGradient id="glow" cx="720" cy="500" r="320" gradientUnits="userSpaceOnUse">
        <stop offset="0" stopColor="#f07878" stopOpacity=".9" />
        <stop offset=".3" stopColor="#c84a4a" stopOpacity=".6" />
        <stop offset="1" stopColor="#a83030" stopOpacity="0" />
      </radialGradient>
      <linearGradient id="lip" x1="80" y1="0" x2="1320" y2="0" gradientUnits="userSpaceOnUse">
        <stop offset="0" stopColor="#861619" />
        <stop offset=".45" stopColor="#951c20" />
        <stop offset=".75" stopColor="#5f1717" />
        <stop offset="1" stopColor="#80191b" />
      </linearGradient>
      <clipPath id="bodyClip"><path d={bodyPath} /></clipPath>
      <clipPath id="flangeClip"><path d={flangePath} /></clipPath>
      <clipPath id="rimClip"><path d={rimPath} /></clipPath>
    </defs>

    {/* outer body */}
    <path d={bodyPath} fill="url(#body)" />
    <g clipPath="url(#bodyClip)">
      <path d="M60 280h120C110 480 135 700 240 890L120 860 60 640z" fill="url(#leftEdge)" />
      <path d="M70 500c20 0 60 50 80 130 0 90 25 170 60 230L130 810z" fill="#7c2530" fillOpacity=".5" />
      <path d="M720 560C790 620 880 700 872 800C860 880 830 950 740 1010C690 1040 640 1048 575 1042L760 1100 1080 960 1280 660z" fill="url(#bodySide)" />
      <path d="M700 570l560 90-30 120C1080 800 850 720 690 690z" fill="#79211f" fillOpacity=".55" />
      <path d="M1040 830c40 60 10 130-20 170l100-60 100-160-30-90c-60 20-110 90-150 140z" fill="#32100f" fillOpacity=".4" />
      <path d="M1195 680l50-20-40 110-90 120-60 40c70-80 120-160 140-250z" fill="#2c0c0e" fillOpacity=".5" />
      <path d="M100 300C240 430 520 510 700 560L680 620C450 560 220 480 100 330z" fill="#a0272a" fillOpacity=".4" />
      <path d="M170 370l40 30-20 60-30-20zM245 410l60 25 20 65-65-10zM570 540l110 30-60 90-80-30z" fill="#b64448" fillOpacity=".3" />
      <path d="M700 560l-70 105 60 30 80-110z" fill="#9d4145" fillOpacity=".4" />
      <path d="M180 560C190 680 270 740 430 745C500 750 570 745 620 740L540 650" stroke="#6d1113" strokeOpacity=".25" strokeWidth="5" />
      <path d="M290 602q40-14 76 20l8 82-72-22-18-44z" fill="#6f1013" fillOpacity=".85" />
      <path d="M430 643l84 10 23 56-18 17-86-14z" fill="#6f1013" fillOpacity=".85" />
      <path d="M302 680v28M366 700l6 28M440 712v32M452 714v33M516 722l4 28" stroke="#5d0c0e" strokeWidth="3" />
      <path d="M430 540l70 30 50-25 25 30-20 50-75-30z" fill="#6f1518" fillOpacity=".35" />
      <path d="M610 575l12 4-8 45-12-4zM640 575l10 4-8 24-8-4z" fill="#5e1416" fillOpacity=".6" />
      <path d="M795 600l5 80M835 605l-40 70M790 675l30-12" stroke="#571519" strokeWidth="4" strokeOpacity=".7" />
      <path d="M865 670v38M876 680v32M892 690l-6 24M915 680l-4 35M935 670v50M1010 710l16 12M1060 680v30M1085 700v28M850 690v20M1100 690v30" stroke="#a65a50" strokeWidth="4" strokeOpacity=".6" />
      <path d="M985 680l16-6 5 20 20-10 14 22M1050 690l8 26 18-20M945 755l40-4 30-10M1100 715l36-15M990 690l22 14" stroke="#d59c94" strokeWidth="4" strokeOpacity=".6" />
      <path d="M975 712l16-4M994 730l6-22M790 712l16 3M1065 738h8M990 722v12" stroke="#d97326" strokeWidth="5" strokeOpacity=".7" />
      <path d="M870 815h120l-14 25H880zM895 855c80 0 170-30 220-90" stroke="#a05a58" strokeWidth="2" strokeOpacity=".6" />
      <path d="M925 824h8M945 824h6M962 824h8M890 832h14" stroke="#280a0a" strokeWidth="7" strokeOpacity=".7" />
      <path d="M1145 660l75 8-20 30c-30 20-50 25-60 5z" fill="#9a4748" fillOpacity=".35" />
      <path d="M790 970l260-90M770 1000l290-70M880 860l-80 130M960 880l-70 130M1010 880l-40 120" stroke="#3c1214" strokeWidth="2" strokeDasharray="6 10" strokeOpacity=".45" />
      <circle cx="636" cy="657" r="4" fill="#ed8a80" />
    </g>
    <path d={bodyPath} stroke="#120505" strokeWidth="4" />
    <path d="M88 320C88 380 180 445 260 500C370 568 540 636 680 684C830 735 960 768 1070 778C1130 782 1180 778 1204 765" stroke="#0c0404" strokeWidth="4" />

    {/* flange */}
    <path d={flangePath} fill="url(#lip)" />
    <g clipPath="url(#flangeClip)">
      <path d="M60 168l95 12C420 120 650 220 780 285h60L580 20H100z" fill="url(#flange)" />
      <path d="M60 168l95 12-16 50C160 310 240 360 330 415L400 450 230 380 100 265z" fill="#6c1a1c" />
      <path d="M755 280l80 10 490 350-35 20-50-55C1140 505 900 360 755 280z" fill="#661819" />
      <path d="M1240 595l80 45-10 18-80-20z" fill="#98383a" />
    </g>
    <path d={flangePath} stroke="#0c0404" strokeWidth="4" />
    <path d="M70 190C85 270 190 350 300 408C430 470 590 514 740 548C930 590 1120 632 1328 656" stroke="#0c0404" strokeWidth="4" />

    {/* inside of the bowl */}
    <path d={rimPath} fill="url(#inside)" />
    <g clipPath="url(#rimClip)">
      <path d="M155 278C300 265 470 305 740 410C900 475 1040 550 1130 625L700 580 300 430z" fill="#7a2022" fillOpacity=".3" />
      <path d="M140 222C160 150 220 130 330 140C290 150 230 200 220 245L150 280z" fill="#4f201f" fillOpacity=".85" />
      <path d="M165 283h37v50l-32-25z" fill="#b68984" fillOpacity=".35" />
      <path d="M150 245c80-20 60 0 90-40 50-45 110-50 180-40" stroke="#7d4644" strokeWidth="3" />
      <path d="M240 215c50-35 120-45 150-40M250 165l-20 60" stroke="#a9605b" strokeWidth="2" strokeOpacity=".6" />
      <path d="M400 165l60 5 10 35-45 10-35-20z" fill="#4c1515" fillOpacity=".5" />
      <path d="M215 255l20-20M250 230v30M262 225v25M278 235v24M335 225l-3 24M390 235v34M405 240l-8 30M430 245l-6 30M468 240l-12 32" stroke="#bd766a" strokeWidth="3" strokeOpacity=".7" />
      <path d="M285 265l24 12 40-8M300 252l16 12M335 278l20-14v24M375 210l18-8" stroke="#d6a39a" strokeWidth="5" strokeOpacity=".7" />
      <path d="M345 225l-5 22M362 235v18M340 236h16" stroke="#c9721f" strokeWidth="4" />
      <ellipse cx="546" cy="245" rx="18" ry="11" fill="#b9551e" />
      <path d="M518 232q25-16 50 4" stroke="#6a2038" strokeWidth="5" />
      <path d="M545 258l-55 120M545 265l-12 140M548 260l5 120M470 392l45-15M525 410l45 5-30 16z" stroke="#5b1618" strokeWidth="3" strokeOpacity=".8" />
      <path d="M230 310l170 40M250 340l200 55M320 310l-20 60M400 325l-20 80" stroke="#4b1212" strokeWidth="2" strokeDasharray="5 7" strokeOpacity=".4" />
      <circle cx="720" cy="500" r="320" fill="url(#glow)" />
      <path d="M785 310l150 90c80 50 160 100 210 140l-30 90-170-130-200-100z" fill="#8b1518" fillOpacity=".6" />
      <path d="M785 310l-55 130 40-8 40-110z" fill="#771718" fillOpacity=".35" />
      <path d="M708 350l10 4-8 44-10-3zM832 375l9 5-6 32-9-4zM700 425l10 3-3 18-10-2z" fill="#67161a" fillOpacity=".6" />
      <path d="M712 490l55 35 70 48L690 540z" fill="#ffaaa7" />
      <path d="M690 540l140 30 20-8 230 55-200-5z" fill="#e05556" fillOpacity=".4" />
      <path d="M845 468l38 16-18 42-34-16zM940 520l28 14-14 48-30-18z" fill="#ffaaa5" />
      <path d="M858 472l-12 42M870 478l-13 42M950 526l-11 46M960 530l-12 46" stroke="#b34747" strokeWidth="3" />
      <path d="M985 500l20-12 60 40 18 32-12 8-38-25-30-14z" fill="#741317" fillOpacity=".6" />
      <path d="M1030 455l40 20 50 75-30-10-50-50z" fill="#b03a3d" fillOpacity=".45" />
      <path d="M1130 510l100 70 20 60-125-10z" fill="#aa2f31" fillOpacity=".6" />
      <path d="M1170 570l-25 62M1205 570l-12 55" stroke="#d05252" strokeWidth="4" strokeOpacity=".5" />
      <circle cx="702" cy="302" r="4" fill="#f0a090" />
    </g>
    <path d={rimPath} stroke="#0c0404" strokeWidth="4" />
    <path d="M155 278C300 265 470 308 590 350C740 405 850 445 930 490C1020 535 1090 585 1130 625" stroke="#0c0404" strokeWidth="4" />
    <path d="M400 452C490 488 590 514 700 538" stroke="#8d7474" strokeWidth="4" />
    <path d="M300 396C440 470 700 536 900 580C990 600 1080 618 1130 625" stroke="#0c0404" strokeWidth="4" />
    <path d="M1095 633l35 6M1150 640l40 5" stroke="#c46a32" strokeWidth="4" strokeDasharray="6 7" />
  </svg>
);

/* ---------- callout arrows drawn over the window ---------- */

const Callouts: React.FC = () => (
  <svg
    className="absolute top-0 left-0 w-[760px] h-[270px] pointer-events-none"
    viewBox="0 0 760 270"
    fill="none"
    stroke="#ed1c24"
    strokeWidth="5"
    strokeLinecap="round"
    strokeLinejoin="round"
    aria-hidden="true"
  >
    <path d="M369 132V37M346 61l23-24 22 23" />
    <path d="M717.500 257V151M690 180l27.500-29L744 180" />
  </svg>
);

export default function App() {
  return (
    <div className="relative flex flex-col min-h-screen overflow-hidden bg-white font-['Open_Sans','Noto_Sans',sans-serif] text-[11px] leading-4">
      <TitleBar />
      <div className="absolute top-0 left-[840px] flex h-px w-[241px] bg-[#e8e8e8]">
        <div className="w-12 bg-[#0078d7]" />
      </div>
      <Ribbon />
      <div className="relative flex flex-col flex-1">
        <CommandTabs />
        <ViewToolbar />
        <div className="flex flex-1">
          <FeatureTree />
          <main className="flex-1 pt-[181px] pl-[532px]">
            <Bowl />
          </main>
        </div>
      </div>
      <Callouts />
    </div>
  );
}
